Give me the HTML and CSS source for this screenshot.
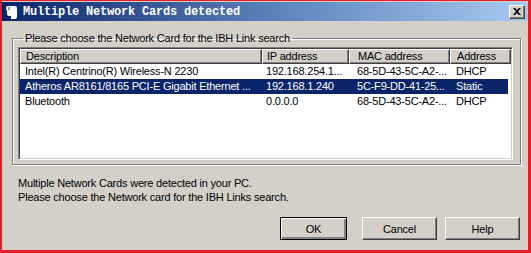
FILE: index.html
```html
<!DOCTYPE html>
<html>
<head>
<meta charset="utf-8">
<link rel="stylesheet" href="styles.css">
</head>
<body>
<div class="window">
  <div class="titlebar">
    <svg class="appicon" width="11" height="13" viewBox="0 0 11 13">
      <path d="M2 0 H9 Q11 0 11 2 V11 Q11 13 9 13 H5 V10 H3 Q1 10 1 8 V5 Q0 4 0 2 Q0 0 2 0 Z" fill="#ffffff"/>
      <path d="M3 1 V4" stroke="#0a246a" stroke-width="1"/>
    </svg>
    <span class="title">Multiple Network Cards detected</span>
    <div class="closebtn">
      <svg width="8" height="7" viewBox="0 0 8 7"><path d="M0 0 L2 0 L4 2 L6 0 L8 0 L5 3.5 L8 7 L6 7 L4 5 L2 7 L0 7 L3 3.5 Z" fill="#000"/></svg>
    </div>
  </div>
  <fieldset class="group">
    <legend class="group-label">Please choose the Network Card for the IBH Link search</legend>
    <div class="listview">
      <div class="row header">
        <div class="col c1 hcell">Description</div>
        <div class="col c2 hcell">IP address</div>
        <div class="col c3 hcell">MAC address</div>
        <div class="col c4 hcell">Address</div>
      </div>
      <div class="row">
        <div class="col c1">Intel(R) Centrino(R) Wireless-N 2230</div>
        <div class="col c2">192.168.254.1...</div>
        <div class="col c3">68-5D-43-5C-A2-...</div>
        <div class="col c4">DHCP</div>
      </div>
      <div class="row selected">
        <div class="col c1">Atheros AR8161/8165 PCI-E Gigabit Ethernet ...</div>
        <div class="col c2">192.168.1.240</div>
        <div class="col c3">5C-F9-DD-41-25...</div>
        <div class="col c4">Static</div>
      </div>
      <div class="row">
        <div class="col c1">Bluetooth</div>
        <div class="col c2">0.0.0.0</div>
        <div class="col c3">68-5D-43-5C-A2-...</div>
        <div class="col c4">DHCP</div>
      </div>
    </div>
  </fieldset>
  <div class="message">
    <div>Multiple Network Cards were detected in your PC.</div>
    <div>Please choose the Network card for the IBH Links search.</div>
  </div>
  <div class="buttons">
    <button class="btn default">OK</button>
    <button class="btn cancel">Cancel</button>
    <button class="btn">Help</button>
  </div>
</div>
</body>
</html>
```
FILE: styles.css
```css
html, body {
  margin: 0;
  padding: 0;
  background: #d4d0c8;
}
body {
  font-family: "Liberation Sans", Arial, sans-serif;
  font-size: 11px;
  letter-spacing: -0.2px;
  color: #000;
}
.window {
  width: 531px;
  height: 253px;
  box-sizing: border-box;
  border-style: solid;
  border-color: #e41e24;
  border-width: 1px 3px 3px 2px;
  background: #d4d0c8;
  display: flex;
  flex-direction: column;
  overflow: hidden;
}
.titlebar {
  margin-top: 1px;
  height: 19px;
  flex: none;
  display: flex;
  align-items: center;
  padding-left: 4px;
  padding-right: 3px;
  background: linear-gradient(to right, #0a246a 0%, #5a7fb8 50%, #a6caf0 100%);
}
.appicon {
  flex: none;
  margin-right: 6px;
  margin-top: 1px;
}
.title {
  font-family: "Liberation Mono", "DejaVu Sans Mono", monospace;
  font-weight: bold;
  font-size: 12px;
  color: #fff;
  letter-spacing: -0.2px;
  flex: 1;
  white-space: nowrap;
}
.closebtn {
  width: 16px;
  height: 14px;
  box-sizing: border-box;
  background: #d4d0c8;
  border: 1px solid;
  border-color: #fff #404040 #404040 #fff;
  box-shadow: inset -1px -1px 0 #808080;
  display: flex;
  align-items: center;
  justify-content: center;
}
.group {
  margin: 11px 7px 0 10px;
  padding: 2px 7px 4px 5px;
  border: 1px solid #808080;
  box-shadow: 1px 1px 0 #fff, inset 1px 1px 0 #fff;
  min-width: 0;
}
.group-label {
  padding: 0 2px;
  margin-left: 5px;
  line-height: 13px;
}
.listview {
  height: 113px;
  box-sizing: border-box;
  background: #fff;
  border: 1px solid;
  border-color: #808080 #fff #fff #808080;
  box-shadow: inset 1px 1px 0 #404040, inset -1px -1px 0 #d4d0c8;
  padding: 1px 2px 1px 1px;
}
.row {
  display: flex;
  height: 15px;
  line-height: 15px;
  white-space: nowrap;
}
.row.header {
  height: 15px;
}
.col {
  flex: none;
  box-sizing: border-box;
  padding-left: 5px;
  overflow: hidden;
}
.c1 { width: 242px; }
.c2 { width: 87px; padding-left: 4px; }
.c3 { width: 101px; padding-left: 8px; }
.c4 { width: 61px; padding-left: 6px; }
.hcell {
  background: #d4d0c8;
  border: 1px solid;
  border-color: #fff #404040 #404040 #fff;
  box-shadow: inset -1px -1px 0 #808080;
  line-height: 13px;
}
.row.selected {
  background: #0a246a;
  color: #fff;
  margin-right: 2px;
}
.message {
  margin: 11px 0 0 16px;
  line-height: 14px;
}
.buttons {
  display: flex;
  justify-content: flex-end;
  margin-top: 13px;
  padding-right: 8px;
}
.btn {
  font-family: "Liberation Sans", Arial, sans-serif;
  font-size: 11px;
  letter-spacing: -0.2px;
  color: #000;
  height: 23px;
  width: 75px;
  box-sizing: border-box;
  background: #d4d0c8;
  border: 1px solid;
  border-color: #fff #404040 #404040 #fff;
  box-shadow: inset -1px -1px 0 #808080;
  padding: 0;
  margin-left: 8px;
}
.btn.default {
  width: 67px;
  border: 1px solid #000;
  box-shadow: inset 1px 1px 0 #fff, inset -2px -2px 0 #808080;
}
.btn.cancel {
  margin-left: 15px;
}
```
